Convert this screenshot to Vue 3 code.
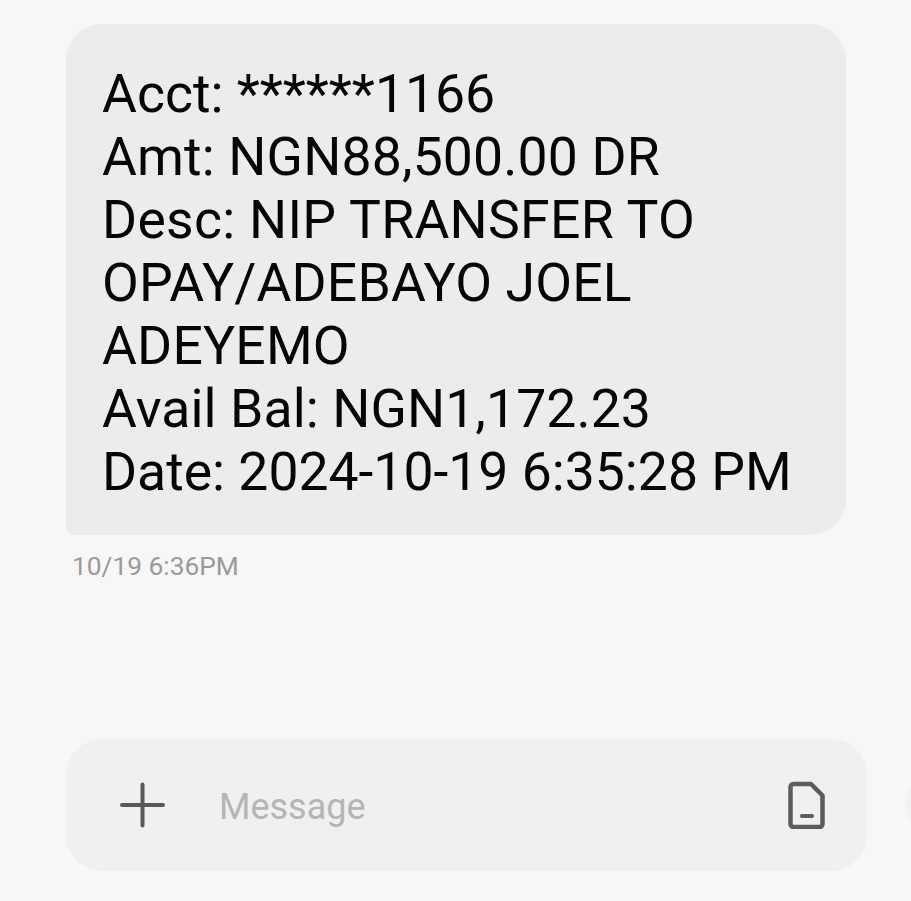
<script setup>
const lines = [
  { text: 'Acct: ******1166', tracking: 0 },
  { text: 'Amt: NGN88,500.00 DR', tracking: 0.15 },
  { text: 'Desc: NIP TRANSFER TO', tracking: 0.29 },
  { text: 'OPAY/ADEBAYO JOEL', tracking: 0.18 },
  { text: 'ADEYEMO', tracking: 0.2 },
  { text: 'Avail Bal: NGN1,172.23', tracking: 0.09 },
  { text: 'Date: 2024-10-19 6:35:28 PM', tracking: 0 },
]
</script>

<template>
  <main class="screen">
    <section class="thread">
      <article class="bubble">
        <div
          v-for="line in lines"
          :key="line.text"
          class="line"
          :style="{ letterSpacing: line.tracking + 'px' }"
        >{{ line.text }}</div>
      </article>
      <time class="stamp">10/19 6:36PM</time>
    </section>
    <footer class="composer">
      <div class="field">
        <svg class="plus" width="46" height="46" viewBox="0 0 46 46" fill="none" stroke="#585858" stroke-linecap="round">
          <path d="M23.500 2.500v41" stroke-width="4" />
          <path d="M3 23h41" stroke-width="4" />
        </svg>
        <span class="placeholder">Message</span>
        <svg class="sim" width="38" height="48" viewBox="0 0 38 48" fill="none" stroke="#5c5c5c" stroke-linejoin="round">
          <path d="M3.500 6a3 3 0 0 1 3-3H24l11.500 11.500V43a3 3 0 0 1-3 3h-26a3 3 0 0 1-3-3z" stroke-width="4.500" />
          <path d="M15 35h10" stroke-width="4" stroke-linecap="round" />
        </svg>
      </div>
      <div class="send"></div>
    </footer>
  </main>
</template>

<style>
html, body { margin: 0; background: #f7f7f7; }
</style>

<style scoped>
.screen {
  width: 911px;
  height: 901px;
  overflow: hidden;
  background: #f7f7f7;
  font-family: Roboto, "Liberation Sans", sans-serif;
  display: flex;
  flex-direction: column;
  justify-content: space-between;
  box-sizing: border-box;
  padding: 24px 0 30px 66px;
}
.thread { display: flex; flex-direction: column; align-items: flex-start; }
.bubble {
  width: 780px;
  height: 511px;
  box-sizing: border-box;
  padding: 38px 0 0 36px;
  background: #ececec;
  border-radius: 36px 36px 36px 8px;
  color: #050505;
  font-size: 53.5px;
  line-height: 63px;
  white-space: nowrap;
}
.stamp {
  margin: 16px 0 0 6px;
  font-size: 26.3px;
  line-height: 30px;
  color: #9a9a9a;
}
.composer { display: flex; align-items: center; gap: 38px; }
.field {
  width: 801px;
  height: 132px;
  flex: none;
  box-sizing: border-box;
  display: flex;
  align-items: center;
  padding: 0 42px 0 53px;
  background: #f0f0f0;
  border-radius: 36px;
}
.plus { flex: none; }
.placeholder {
  margin-left: 54px;
  flex: 1;
  font-size: 36px;
  line-height: 40px;
  padding-top: 3px;
  color: #b5b5b5;
}
.sim { flex: none; }
.send {
  width: 60px;
  height: 60px;
  flex: none;
  border-radius: 50%;
  background: #f2f2f2;
}
</style>
